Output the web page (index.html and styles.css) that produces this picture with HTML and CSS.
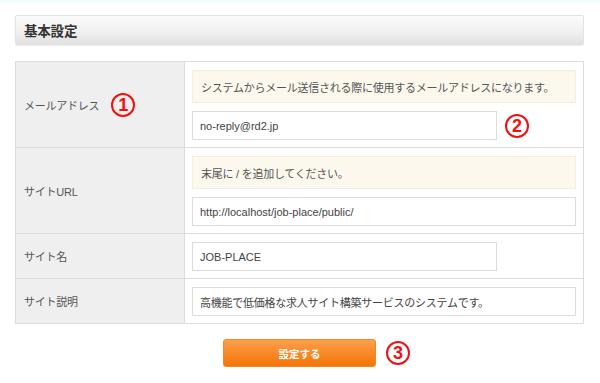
FILE: index.html
```html
<!DOCTYPE html>
<html lang="ja">
<head>
<meta charset="utf-8">
<title>基本設定</title>
<link rel="stylesheet" href="styles.css">
</head>
<body>
<div class="page">
  <h2 class="section-title">基本設定</h2>
  <div class="settings">
    <div class="row">
      <div class="label"><span class="ja">メールアドレス</span><span class="mark">1</span></div>
      <div class="value">
        <div class="note ja">システムからメール送信される際に使用するメールアドレスになります。</div>
        <div class="field-line">
          <div class="input short">no-reply@rd2.jp</div>
          <span class="mark">2</span>
        </div>
      </div>
    </div>
    <div class="row">
      <div class="label"><span class="ja">サイトURL</span></div>
      <div class="value">
        <div class="note ja">末尾に / を追加してください。</div>
        <div class="input">http://localhost/job-place/public/</div>
      </div>
    </div>
    <div class="row">
      <div class="label"><span class="ja">サイト名</span></div>
      <div class="value">
        <div class="input short">JOB-PLACE</div>
      </div>
    </div>
    <div class="row">
      <div class="label"><span class="ja">サイト説明</span></div>
      <div class="value">
        <div class="input ja">高機能で低価格な求人サイト構築サービスのシステムです。</div>
      </div>
    </div>
  </div>
  <div class="actions">
    <button class="submit" type="button">設定する</button>
    <span class="mark">3</span>
  </div>
</div>
</body>
</html>
```

FILE: styles.css
```css
html, body {
  margin: 0;
  padding: 0;
  background: #fff;
}
body {
  border-top: 2px solid #f1fbfd;
  font-family: "Liberation Sans", "Noto Sans CJK JP", sans-serif;
  font-size: 11px;
  color: #555;
}
.page {
  width: 569px;
  padding: 13px 0 0 15px;
}
.ja {
  letter-spacing: -0.25px;
}
.section-title {
  margin: 0;
  height: 30px;
  box-sizing: border-box;
  padding-left: 8px;
  display: flex;
  align-items: center;
  font-size: 13.5px;
  font-weight: bold;
  color: #333;
  letter-spacing: -0.2px;
  background: linear-gradient(#fbfbfb, #f2f2f2 50%, #e1e1e1);
  border: 1px solid #e3e3e3;
  border-radius: 2px;
  box-shadow: 0 1px 1px rgba(0,0,0,0.08);
}
.settings {
  margin-top: 16px;
  border: 1px solid #dcdcdc;
}
.row {
  display: grid;
  grid-template-columns: 169px 1fr;
  border-top: 1px solid #dcdcdc;
}
.row:first-child {
  border-top: none;
}
.label {
  background: #efefef;
  border-right: 1px solid #dcdcdc;
  display: flex;
  align-items: center;
  gap: 12px;
  padding-left: 8px;
}
.value {
  display: flex;
  flex-direction: column;
  gap: 8px;
  padding: 8px 7px 7px 7px;
}
.note {
  height: 33px;
  box-sizing: border-box;
  background: #fcf8ed;
  border: 1px solid #f3eedd;
  padding: 0 8px;
  display: flex;
  align-items: center;
}
.field-line {
  display: flex;
  align-items: center;
  gap: 8px;
}
.input {
  height: 29px;
  box-sizing: border-box;
  border: 1px solid #dcdcdc;
  background: #fff;
  padding: 0 7px;
  display: flex;
  align-items: center;
  color: #444;
}
.input.short {
  width: 305px;
}
.mark {
  width: 24px;
  height: 24px;
  box-sizing: border-box;
  flex: none;
  border: 2px solid #f01010;
  border-radius: 50%;
  color: #f01010;
  font-family: "Liberation Sans", sans-serif;
  font-weight: bold;
  font-size: 18px;
  letter-spacing: 0;
  display: flex;
  align-items: center;
  justify-content: center;
  line-height: 1;
}
.actions {
  display: flex;
  align-items: center;
  gap: 10px;
  margin-top: 15px;
  padding-left: 208px;
}
.submit {
  width: 153px;
  height: 28px;
  border: 1px solid #f2872a;
  border-radius: 3px;
  background: linear-gradient(#fba04a, #f98a2a 50%, #f57505);
  color: #fff;
  font-family: "Noto Sans CJK JP", sans-serif;
  font-weight: bold;
  font-size: 10.5px;
  padding: 0;
  box-shadow: 0 1px 1px rgba(0,0,0,0.1);
}
```
